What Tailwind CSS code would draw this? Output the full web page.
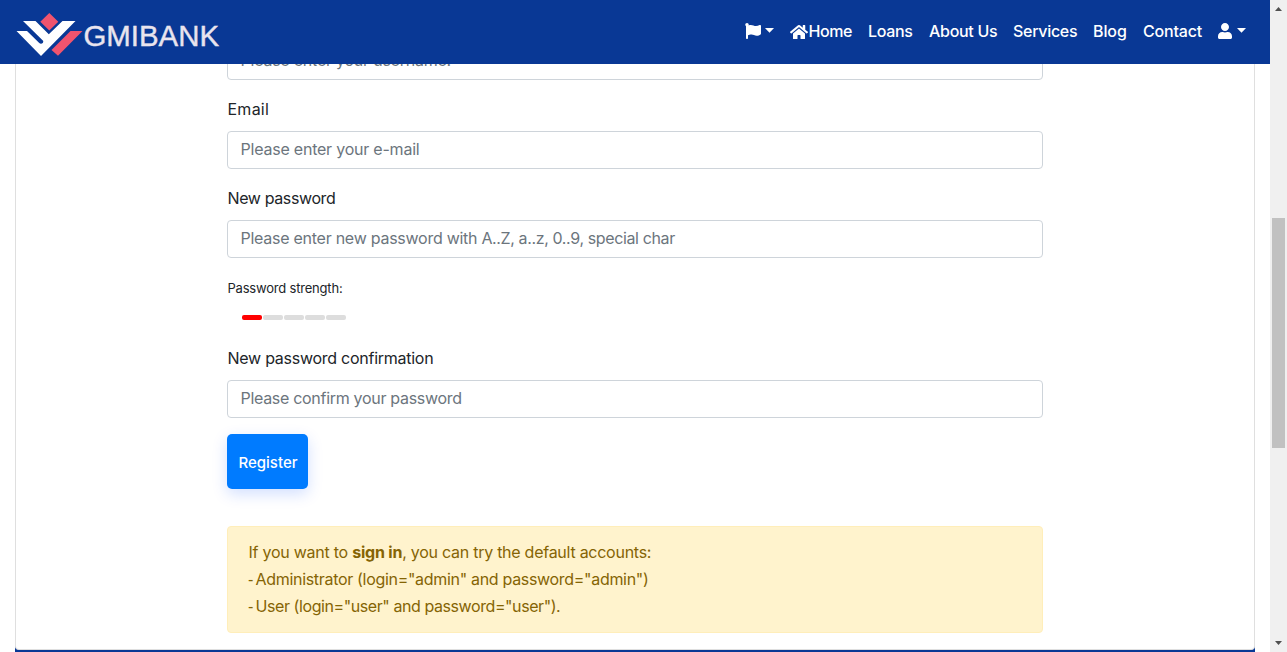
<!DOCTYPE html>
<html lang="en">
<head>
<meta charset="utf-8">
<title>GMIBANK</title>
<script src="https://cdn.jsdelivr.net/npm/@tailwindcss/browser@4"></script>
</head>
<body class="h-[652px] overflow-hidden bg-white font-['Inter','Liberation_Sans',sans-serif] text-base leading-[27px] text-[#212529]">
<div class="flex h-[652px]">
  <div class="flex w-[1270px] flex-col">
    <header class="relative z-10 flex h-16 shrink-0 items-center justify-between bg-[#093895] pr-6 pl-4">
      <svg class="h-16 w-[210px]" viewBox="16 0 210 64">
        <path fill="#fff" d="M23 21H35.500L48.800 34.300 62.500 21H75.500L41 56 16.500 31H27L39 42.800Q41 44.500 43 42.800L43.300 41Z"/>
        <path fill="#f0546e" d="M49.300 13l9 8.800-9 8.700-9-8.700zM70.500 31H82.500L58 55.700 51.500 50z"/>
        <text x="83.500" y="45.500" textLength="135.500" lengthAdjust="spacingAndGlyphs" fill="#e9e4ee" stroke="#e9e4ee" stroke-width=".4" font-family="Liberation Sans" font-size="30">GMIBANK</text>
      </svg>
      <nav class="flex h-[26px] items-center gap-4 font-medium whitespace-nowrap text-white">
        <a class="flex w-[29px] items-center justify-between">
          <svg class="-mt-0.5 h-4 w-4" viewBox="0 0 512 512" fill="#fff"><path d="M349.565 98.783C295.978 98.783 251.721 64 184.348 64c-24.955 0-47.309 4.384-68.045 12.013a55.947 55.947 0 0 0 3.586-23.562C118.117 24.015 94.806 1.206 66.338.048 34.345-1.254 8 24.296 8 56c0 19.026 9.497 35.825 24 45.945V488c0 13.255 10.745 24 24 24h16c13.255 0 24-10.745 24-24v-94.400c28.311-12.064 63.582-22.122 114.435-22.122 53.588 0 97.844 34.783 165.217 34.783 48.169 0 86.667-16.294 122.505-40.858C506.840 359.452 512 349.571 512 339.045v-243.100c0-23.393-24.269-38.870-45.485-29.016-34.338 15.948-76.454 31.854-116.950 31.854z"/></svg>
          <svg class="mb-1 h-[5px] w-[9px]" viewBox="0 0 9 5" fill="#fff"><path d="M0 0h9L4.500 4.800z"/></svg>
        </a>
        <a class="flex w-[62px] items-center"><svg class="h-4 w-[18px] shrink-0" viewBox="0 0 576 512" fill="#fff"><path d="M280.370 148.260L96 300.110V464a16 16 0 0 0 16 16l112.060-.29a16 16 0 0 0 15.920-16V368a16 16 0 0 1 16-16h64a16 16 0 0 1 16 16v95.640a16 16 0 0 0 16 16.050L464 480a16 16 0 0 0 16-16V300L295.670 148.260a12.190 12.190 0 0 0-15.300 0zM571.600 251.470L488 182.560V44.050a12 12 0 0 0-12-12h-56a12 12 0 0 0-12 12v72.610L318.470 43a48 48 0 0 0-61 0L4.340 251.470a12 12 0 0 0-1.600 16.900l25.500 31A12 12 0 0 0 45.150 301l235.220-193.740a12.190 12.190 0 0 1 15.300 0L530.900 301a12 12 0 0 0 16.900-1.600l25.500-31a12 12 0 0 0-1.700-16.930z"/></svg><span class="pb-0.5 pl-[0.5px] tracking-[-0.4px]">Home</span></a>
        <a class="w-[45px] pb-0.5 tracking-[-0.35px]">Loans</a>
        <a class="w-[68px] pb-0.5 tracking-[-0.3px]">About Us</a>
        <a class="w-16 pb-0.5 tracking-[-0.3px]">Services</a>
        <a class="w-[34px] pb-0.5 tracking-[-0.1px]">Blog</a>
        <a class="w-[59px] pb-0.5 tracking-[-0.2px]">Contact</a>
        <a class="flex w-7 items-center justify-between">
          <svg class="-mt-0.5 h-4 w-3.5" viewBox="0 0 448 512" fill="#fff"><path d="M224 256c70.700 0 128-57.300 128-128S294.700 0 224 0 96 57.300 96 128s57.300 128 128 128zm89.600 32h-16.700c-22.200 10.200-46.900 16-72.900 16s-50.600-5.800-72.900-16h-16.700C60.200 288 0 348.200 0 422.400V464c0 26.500 21.500 48 48 48h352c26.500 0 48-21.500 48-48v-41.600c0-74.200-60.200-134.400-134.400-134.400z"/></svg>
          <svg class="mb-1 h-[5px] w-[9px]" viewBox="0 0 9 5" fill="#fff"><path d="M0 0h9L4.500 4.800z"/></svg>
        </a>
      </nav>
    </header>
    <main class="mx-[15px] grow bg-[#093895]">
      <div class="-mt-[22px] flex h-[608px] flex-col rounded-b border border-t-0 border-[#dfdfdf] bg-white px-[211px] whitespace-nowrap">
        <div class="flex h-[38px] shrink-0 items-center rounded border border-[#ced4da] pr-3 pb-0.5 pl-[12.5px] text-[#6c757d]"><span class="tracking-[-0.23px]">Please enter your username.</span></div>
        <label class="mt-4 mb-2 pl-[0.5px]"><span class="tracking-[0.25px]">Email</span></label>
        <div class="flex h-[38px] shrink-0 items-center rounded border border-[#ced4da] pr-3 pb-0.5 pl-[12.5px] text-[#6c757d]"><span class="tracking-[-0.22px]">Please enter your e-mail</span></div>
        <label class="mt-4 mb-2 pl-[0.5px]"><span class="tracking-[-0.38px]">New password</span></label>
        <div class="flex h-[38px] shrink-0 items-center rounded border border-[#ced4da] pr-3 pb-0.5 pl-[12.5px] text-[#6c757d]"><span class="tracking-[-0.26px]">Please enter new password with </span><span class="tracking-[-0.37px] whitespace-pre">&#8203; A..Z, a..z, 0..9, special char</span></div>
        <div class="mt-[17px] h-[40px] pl-[0.5px] text-[13px]"><span class="tracking-[-0.2px]">Password strength:</span></div>
        <div class="flex h-[30px] gap-px pl-[15px]">
          <i class="h-[5px] w-5 rounded-[2px] bg-[#f00]"></i><i class="h-[5px] w-5 rounded-[2px] bg-[#ddd]"></i><i class="h-[5px] w-5 rounded-[2px] bg-[#ddd]"></i><i class="h-[5px] w-5 rounded-[2px] bg-[#ddd]"></i><i class="h-[5px] w-5 rounded-[2px] bg-[#ddd]"></i>
        </div>
        <label class="mb-2 pl-[0.5px]"><span class="tracking-[-0.26px]">New password confirmation</span></label>
        <div class="flex h-[38px] shrink-0 items-center rounded border border-[#ced4da] pr-3 pb-0.5 pl-[12.5px] text-[#6c757d]"><span class="tracking-[-0.3px]">Please confirm your password</span></div>
        <button class="mt-4 h-[55px] w-[81px] shrink-0 rounded-[5px] bg-[#007bff] pt-0.5 pl-px text-[15px] font-medium text-white shadow-[0_5px_15px_rgba(0,80,255,0.18)]"><span>Register</span></button>
        <div class="mt-[37px] h-[107px] shrink-0 rounded border border-[#ffeeba] bg-[#fff3cd] px-5 pt-3 text-[#856404]">
          <div class="pl-[0.5px]"><span class="tracking-[-0.25px]">If you want to </span><strong class="font-bold tracking-[-0.2px]">sign in</strong><span class="tracking-[-0.26px]">, you can try the default accounts:</span></div>
          <div class="flex h-[27px]"><span class="w-[7.5px] font-['Liberation_Sans']">-</span><span class="tracking-[-0.31px]">Administrator (login="admin" and password="admin")</span></div>
          <div class="flex h-[27px]"><span class="w-[7.5px] font-['Liberation_Sans']">-</span><span class="tracking-[-0.42px]">User (login="user" and password="user").</span></div>
        </div>
      </div>
    </main>
  </div>
  <aside class="flex w-[17px] flex-col items-center bg-[#f0f0f0]">
    <svg class="mt-[7px] h-1 w-[7px]" viewBox="0 0 7 4" fill="#505050"><path d="M3.500 0L7 4H0z"/></svg>
    <div class="mt-[207px] h-[230px] w-[13px] bg-[#c1c1c1]"></div>
    <svg class="mt-[193px] h-1 w-[7px]" viewBox="0 0 7 4" fill="#505050"><path d="M0 0h7L3.500 4z"/></svg>
  </aside>
</div>
</body>
</html>
